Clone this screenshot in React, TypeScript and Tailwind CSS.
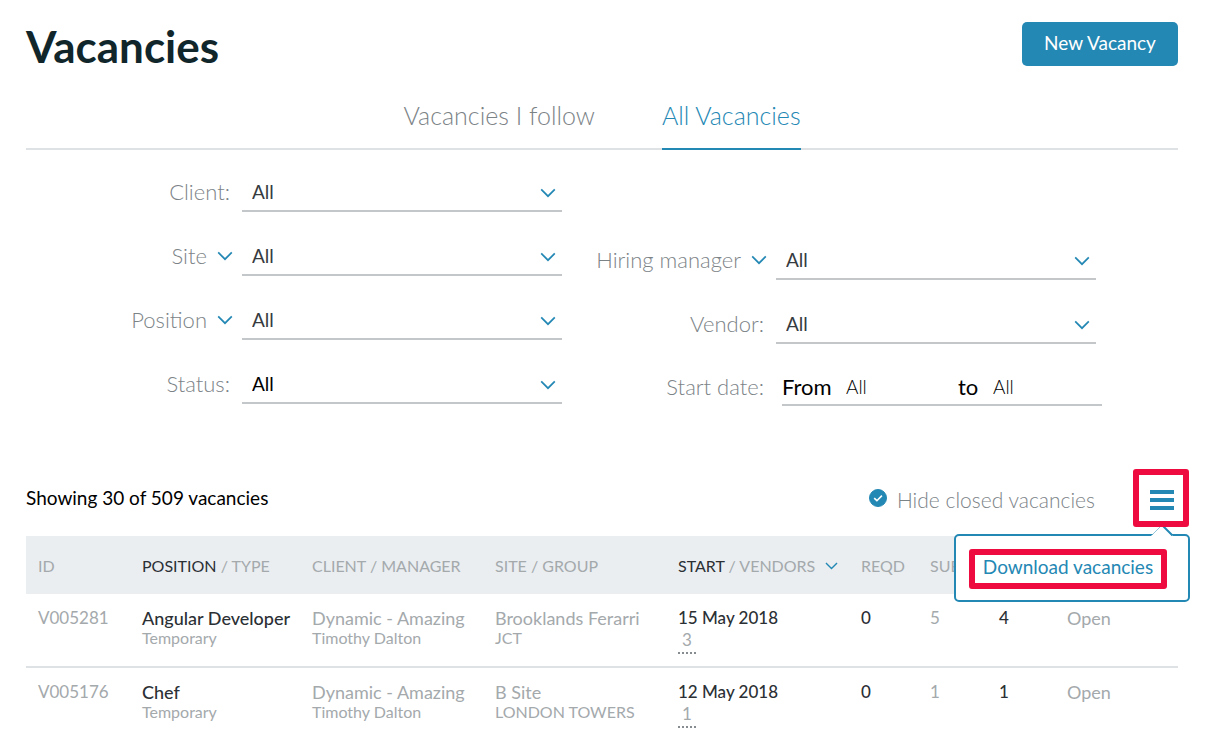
import { useState } from 'react';
import clsx from 'clsx';

interface Vacancy {
  id: string;
  position: string;
  type: string;
  client: string;
  manager: string;
  site: string;
  group: string;
  start: string;
  vendors: number;
  required: number;
  submitted: number;
  hired: number;
  status: string;
}

const vacancies: Vacancy[] = [
  {
    id: 'V005281',
    position: 'Angular Developer',
    type: 'Temporary',
    client: 'Dynamic - Amazing',
    manager: 'Timothy Dalton',
    site: 'Brooklands Ferarri',
    group: 'JCT',
    start: '15 May 2018',
    vendors: 3,
    required: 0,
    submitted: 5,
    hired: 4,
    status: 'Open',
  },
  {
    id: 'V005176',
    position: 'Chef',
    type: 'Temporary',
    client: 'Dynamic - Amazing',
    manager: 'Timothy Dalton',
    site: 'B Site',
    group: 'LONDON TOWERS',
    start: '12 May 2018',
    vendors: 1,
    required: 0,
    submitted: 1,
    hired: 1,
    status: 'Open',
  },
];

function Chevron({ className }: { className?: string }) {
  return (
    <svg viewBox="0 0 16 10" className={clsx('h-[10px] shrink-0', className)} fill="none" aria-hidden="true">
      <path d="M1.2 1.4 8 8.2 14.8 1.4" stroke="#2488b4" strokeWidth="1.7" />
    </svg>
  );
}

interface FilterProps {
  id: string;
  label: string;
  switchable?: boolean;
  dark?: boolean;
}

function FilterLabel({ id, label, switchable }: FilterProps) {
  return (
    <div className={clsx('flex flex-1 items-center justify-end gap-[10px]', switchable ? 'pr-[9px]' : 'pr-3')}>
      <label htmlFor={id} className="text-[22px] leading-7 font-light text-[#7c8387] whitespace-nowrap">
        {label}
      </label>
      {switchable && (
        <button type="button" aria-label={`Change ${label} filter`}>
          <Chevron className="w-4" />
        </button>
      )}
    </div>
  );
}

function Filter(props: FilterProps) {
  return (
    <div className="flex h-10">
      <FilterLabel {...props} />
      <div className="relative w-80">
        <select
          id={props.id}
          className={clsx(
            'w-full h-full appearance-none bg-transparent border-b-2 border-[#c3c7ca] pl-[10px] pt-[3px] text-[19px]',
            props.dark ? 'text-black' : 'text-[#363b3f]'
          )}
        >
          <option>All</option>
        </select>
        <Chevron className="w-4 absolute right-[6px] top-4 pointer-events-none" />
      </div>
    </div>
  );
}

function VacancyRow({ vacancy }: { vacancy: Vacancy }) {
  return (
    <tr className="h-[73px] border-b-2 border-[#dee2e5] last:border-b-0 align-top text-lg leading-6 [&>td]:pt-3 [&>td]:pl-3">
      <td className="text-[17px]">{vacancy.id}</td>
      <td>
        <div className="font-medium text-[#2b3035]">{vacancy.position}</div>
        <div className="text-base leading-4">{vacancy.type}</div>
      </td>
      <td>
        <div>{vacancy.client}</div>
        <div className="text-base leading-4">{vacancy.manager}</div>
      </td>
      <td>
        <div>{vacancy.site}</div>
        <div className="text-base leading-4">{vacancy.group}</div>
      </td>
      <td className="text-[17px]">
        <div className="font-medium text-[#2b3035]">{vacancy.start}</div>
        <button type="button" className="block w-[18px] border-b-2 border-dotted border-[#868c90] pb-0.5 text-center leading-5">
          {vacancy.vendors}
        </button>
      </td>
      <td className="text-[17px] font-medium text-[#2b3035]">{vacancy.required}</td>
      <td className="text-[17px]">{vacancy.submitted}</td>
      <td className="text-[17px] font-medium text-[#2b3035]">{vacancy.hired}</td>
      <td>{vacancy.status}</td>
    </tr>
  );
}

export default function App() {
  const [hideClosed, setHideClosed] = useState(true);
  const [menuOpen, setMenuOpen] = useState(true);

  return (
    <main className="min-h-screen overflow-hidden bg-white pl-[26px] pr-7 pt-[22px] font-['Lato','Liberation_Sans',sans-serif] text-black">
      <header className="flex items-start justify-between">
        <h1 className="text-[44px] leading-12 font-bold text-[#10262b]">Vacancies</h1>
        <button type="button" className="h-11 w-[156px] rounded-[5px] bg-[#2488b4] pb-0.5 text-[19px] text-white">
          New Vacancy
        </button>
      </header>

      <nav className="mt-[22px] flex justify-center gap-[67px] border-b-2 border-[#dee2e5] text-[25px] font-light">
        <a href="#following" className="pt-[5px] pb-[15px] leading-9 text-[#7c8387]">
          Vacancies I follow
        </a>
        <a href="#all" className="-mb-0.5 border-b-2 border-[#2488b4] pt-[5px] pb-[15px] leading-9 text-[#2488b4]">
          All Vacancies
        </a>
      </nav>

      <section className="flex pt-[22px]">
        <div className="flex w-[536px] flex-col gap-6">
          <Filter id="client" label="Client:" />
          <Filter id="site" label="Site" switchable />
          <Filter id="position" label="Position" switchable />
          <Filter id="status" label="Status:" dark />
        </div>
        <div className="flex w-[534px] flex-col gap-6 pt-[68px]">
          <Filter id="manager" label="Hiring manager" switchable />
          <Filter id="vendor" label="Vendor:" />
          <div className="-mr-[6px] flex h-[38px]">
            <FilterLabel id="from" label="Start date:" />
            <div className="ml-[6px] flex w-80 items-center border-b-2 border-[#c3c7ca] text-[22px]">
              <label htmlFor="from" className="w-16">From</label>
              <input id="from" defaultValue="All" className="w-28 pt-0.5 text-[19px] font-light" />
              <label htmlFor="to" className="w-[35px]">to</label>
              <input id="to" defaultValue="All" className="min-w-0 flex-1 pt-0.5 text-[19px] font-light" />
            </div>
          </div>
        </div>
      </section>

      <section className="relative mt-[63px]">
        <div className="-mr-[11px] flex h-[58px] items-center">
          <p className="flex-1 text-[19px]">Showing 30 of 509 vacancies</p>
          <label className="mr-[38px] flex items-center gap-[10px] text-[21px] font-light text-[#7c8387]">
            <input
              type="checkbox"
              checked={hideClosed}
              onChange={(e) => setHideClosed(e.target.checked)}
              className="peer sr-only"
            />
            <svg viewBox="0 0 18 18" className="size-[18px]" fill="none" aria-hidden="true">
              <circle cx="9" cy="9" r="8.5" fill={hideClosed ? '#2488b4' : '#fff'} stroke="#2488b4" />
              {hideClosed && <path d="M5.2 9.1 7.9 11.7 12.9 6.6" stroke="#fff" strokeWidth="1.6" />}
            </svg>
            <span className="pt-1">Hide closed vacancies</span>
          </label>
          <button
            type="button"
            aria-label="Table menu"
            aria-expanded={menuOpen}
            onClick={() => setMenuOpen(!menuOpen)}
            className="relative z-20 flex h-[58px] w-14 items-center justify-center rounded-[3px] border-6 border-[#ee0b40] bg-white"
          >
            <svg viewBox="0 0 24 20" className="mt-1 ml-0.5 h-5 w-6" fill="#2488b4" aria-hidden="true">
              <path d="M0 0h24v4H0zM0 8h24v4H0zM0 16h24v4H0z" />
            </svg>
          </button>
        </div>

        {menuOpen && (
          <div className="absolute top-[65px] -right-3 z-10 h-[68px] w-[236px] rounded-[5px] border-2 border-[#2488b4] bg-white">
            <svg viewBox="0 0 24 12" className="absolute right-[13px] -top-3 h-3 w-6" fill="none" aria-hidden="true">
              <path d="M0 12 11 1 22 12z" fill="#fff" />
              <path d="M1 11 11 1" stroke="#2488b4" strokeWidth="0.5" />
              <path d="M11 1 21.5 11.5" stroke="#2488b4" strokeWidth="2" />
            </svg>
            <button
              type="button"
              className="mt-[13px] ml-[13px] h-10 w-[198px] rounded-[3px] border-6 border-[#ee0b40] pb-1 text-[19px] leading-6 whitespace-nowrap text-[#2488b4]"
            >
              Download vacancies
            </button>
          </div>
        )}

        <table className="mt-[9px] w-full table-fixed border-collapse text-left text-[#a4a9ac]">
          <colgroup>
            <col className="w-[104px]" />
            <col className="w-[170px]" />
            <col className="w-[183px]" />
            <col className="w-[183px]" />
            <col className="w-[183px]" />
            <col className="w-[69px]" />
            <col className="w-[69px]" />
            <col className="w-[68px]" />
            <col />
          </colgroup>
          <thead>
            <tr className="h-[58px] bg-[#eaeef1] text-base whitespace-nowrap [&>th]:pt-0.5 [&>th]:pl-3 [&>th]:font-normal">
              <th>ID</th>
              <th>
                <span className="text-[#2b3035]">POSITION</span> / TYPE
              </th>
              <th>CLIENT / MANAGER</th>
              <th>SITE / GROUP</th>
              <th>
                <button type="button" className="flex items-center gap-[10px]">
                  <span>
                    <span className="text-[#2b3035]">START</span> / VENDORS
                  </span>
                  <Chevron className="w-[13px]" />
                </button>
              </th>
              <th>REQD</th>
              <th>SUBS</th>
              <th aria-label="Hired" />
              <th aria-label="Status" />
            </tr>
          </thead>
          <tbody>
            {vacancies.map((vacancy) => (
              <VacancyRow key={vacancy.id} vacancy={vacancy} />
            ))}
          </tbody>
        </table>
      </section>
    </main>
  );
}
